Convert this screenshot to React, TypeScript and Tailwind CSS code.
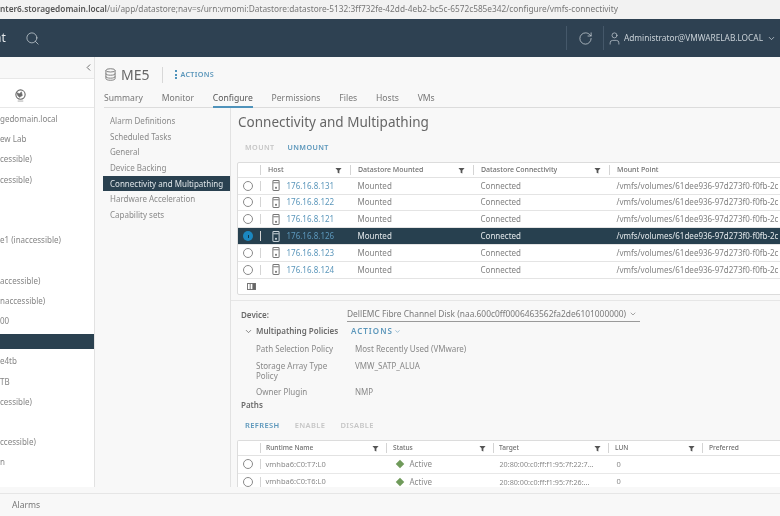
import type { ReactElement } from "react";
import { ChevronDown, ChevronLeft, RotateCw, Search, User } from "lucide-react";

const font = { fontFamily: '"Noto Sans", sans-serif' };

const treeRows = [
  { text: "gedomain.local" },
  { text: "ew Lab" },
  { text: "cessible)" },
  { text: "cessible)" },
  { text: "" },
  { text: "" },
  { text: "e1 (inaccessible)" },
  { text: "" },
  { text: "accessible)" },
  { text: "naccessible)" },
  { text: "00" },
  { text: "", selected: true },
  { text: "e4tb" },
  { text: "TB" },
  { text: "cessible)" },
  { text: "" },
  { text: "ccessible)" },
  { text: "n" },
];

const tabs = ["Summary", "Monitor", "Configure", "Permissions", "Files", "Hosts", "VMs"];

const configItems = [
  "Alarm Definitions",
  "Scheduled Tasks",
  "General",
  "Device Backing",
  "Connectivity and Multipathing",
  "Hardware Acceleration",
  "Capability sets",
];

const hosts = ["176.16.8.131", "176.16.8.122", "176.16.8.121", "176.16.8.126", "176.16.8.123", "176.16.8.124"];

function FilterIcon(): ReactElement {
  return (
    <svg viewBox="0 0 8 8" className="h-[7px] w-[7px] shrink-0 text-[#555]">
      <path d="M0.5 1h7L5 4v3.4L3 6.6V4z" fill="currentColor" />
    </svg>
  );
}

function HostIcon({ light }: { light?: boolean }): ReactElement {
  return (
    <svg viewBox="0 0 8 12" className={`h-[11px] w-[8px] shrink-0 ${light ? "text-[#c8d2d8]" : "text-[#777]"}`}>
      <rect x="0.6" y="0.6" width="6.8" height="10.8" rx="1" fill="none" stroke="currentColor" strokeWidth="1.1" />
      <path d="M1 3h6" stroke="currentColor" strokeWidth="1.1" />
      <rect x="3" y="7.5" width="2" height="2" fill="currentColor" />
    </svg>
  );
}

function Radio({ checked }: { checked?: boolean }): ReactElement {
  return checked ? (
    <span className="flex h-[10px] w-[10px] items-center justify-center rounded-full bg-[#1b87c0]">
      <span className="h-[3px] w-[1px] bg-[#10344a]" />
    </span>
  ) : (
    <span className="h-[10px] w-[10px] rounded-full border border-[#8a8a8a] bg-white" />
  );
}

function HeaderCell({ label, width, filter = true }: { label: string; width: string; filter?: boolean }): ReactElement {
  return (
    <div className={`flex shrink-0 items-center justify-between ${width}`}>
      <span className="truncate">{label}</span>
      {filter && <FilterIcon />}
    </div>
  );
}

function Sep({ wide }: { wide?: boolean }): ReactElement {
  return <span className={`h-[10px] w-px shrink-0 bg-[#d4d4d4] ${wide ? "mx-[7.5px]" : "mx-[5px]"}`} />;
}

function HostTable(): ReactElement {
  return (
    <div className="ml-[6px] mt-[9px] w-[600px] rounded-[2px] border border-[#dcdcdc] bg-white">
      <div className="flex h-[15px] items-center border-b border-[#e2e2e2] pt-[1px] text-[7px] font-medium text-[#6f6f6f]">
        <span className="w-[17px] shrink-0" />
        <span className="ml-[5px] mr-[7px] h-[10px] w-px shrink-0 bg-[#d4d4d4]" />
        <HeaderCell label="Host" width="w-[74px]" />
        <Sep wide />
        <HeaderCell label="Datastore Mounted" width="w-[107px]" />
        <Sep wide />
        <HeaderCell label="Datastore Connectivity" width="w-[120px]" />
        <Sep wide />
        <HeaderCell label="Mount Point" width="w-[160px]" filter={false} />
      </div>
      {hosts.map((ip, i) => {
        const selected = i === 3;
        return (
          <div
            key={ip}
            className={`flex h-[16.8px] items-center border-b border-[#e4e4e4] text-[8px] ${
              selected ? "bg-[#27404f] text-[#e3e8eb]" : "text-[#828282]"
            }`}
          >
            <span className="flex w-[15px] shrink-0 justify-end">
              <Radio checked={selected} />
            </span>
            <span className="ml-[6.5px] h-[10px] w-px shrink-0 bg-[#d4d4d4]" />
            <span className="ml-[11px] flex w-[86px] shrink-0 items-center gap-[7px] text-[#5c97bb]">
              <HostIcon light={selected} />
              {ip}
            </span>
            <span className="w-[123px] shrink-0">Mounted</span>
            <span className="w-[136px] shrink-0">Connected</span>
            <span className="whitespace-nowrap">/vmfs/volumes/61dee936-97d273f0-f0fb-2c</span>
          </div>
        );
      })}
      <div className="flex h-[15px] items-center pl-[9px]">
        <svg viewBox="0 0 10 8" className="h-[7px] w-[9px] text-[#666]">
          <rect x="0.5" y="0.5" width="9" height="7" fill="none" stroke="currentColor" />
          <path d="M3.5 0.5v7" stroke="currentColor" />
          <rect x="6" y="0.5" width="3.5" height="7" fill="currentColor" />
        </svg>
      </div>
    </div>
  );
}

function PathRow({ name, target }: { name: string; target: string }): ReactElement {
  return (
    <div className="flex h-[17.5px] items-center border-b border-[#e8e8e8] text-[7.5px] text-[#8a8a8a]">
      <span className="flex w-[15px] shrink-0 justify-end">
        <Radio />
      </span>
      <span className="ml-[6.5px] h-[10px] w-px shrink-0 bg-[#d4d4d4]" />
      <span className="ml-[5px] w-[131px] shrink-0">{name}</span>
      <span className="flex w-[103px] shrink-0 items-center gap-[7px] text-[8px]">
        <span className="h-[6px] w-[6px] rotate-45 bg-[#6f9a5a]" />
        Active
      </span>
      <span className="w-[117px] shrink-0 whitespace-nowrap text-[7.2px]">{target}</span>
      <span>0</span>
    </div>
  );
}

function PathTable(): ReactElement {
  return (
    <div className="ml-[6px] mt-[10px] w-[600px] rounded-t-[2px] border-x border-t border-[#dcdcdc] bg-white">
      <div className="flex h-[15px] items-center border-b border-[#e2e2e2] text-[6.6px] font-medium text-[#6f6f6f]">
        <span className="w-[17px] shrink-0" />
        <Sep />
        <HeaderCell label="Runtime Name" width="w-[113px]" />
        <span className="ml-[7px] mr-[6px] h-[10px] w-px shrink-0 bg-[#d4d4d4]" />
        <HeaderCell label="Status" width="w-[93px]" />
        <span className="ml-[7px] mr-[5px] h-[10px] w-px shrink-0 bg-[#d4d4d4]" />
        <HeaderCell label="Target" width="w-[102px]" />
        <span className="ml-[7px] mr-[6px] h-[10px] w-px shrink-0 bg-[#d4d4d4]" />
        <HeaderCell label="LUN" width="w-[80px]" />
        <span className="ml-[7px] mr-[6px] h-[10px] w-px shrink-0 bg-[#d4d4d4]" />
        <HeaderCell label="Preferred" width="w-[70px]" filter={false} />
      </div>
      <PathRow name="vmhba6:C0:T7:L0" target="20:80:00:c0:ff:f1:95:7f:22:7..." />
      <PathRow name="vmhba6:C0:T6:L0" target="20:80:00:c0:ff:f1:95:7f:26:..." />
    </div>
  );
}

export default function App(): ReactElement {
  return (
    <div
      style={font}
      className="flex h-[516px] w-[780px] flex-col overflow-hidden bg-[#f8f8f8] text-[#808080] blur-[0.5px]"
    >
      <div className="flex h-[19px] shrink-0 items-center overflow-hidden whitespace-nowrap bg-[#f2f2f2] text-[8.3px] text-[#777]">
        <span className="font-semibold text-[#555]">nter6.storagedomain.local</span>
        <span>/ui/app/datastore;nav=s/urn:vmomi:Datastore:datastore-5132:3ff732fe-42dd-4eb2-bc5c-6572c585e342/configure/vmfs-connectivity</span>
      </div>

      <header className="flex h-[38px] shrink-0 items-center bg-[#2e4152] text-[#c9d1d7]">
        <span className="-ml-[6px] text-[12px] text-[#e5e9ec]">nt</span>
        <Search className="ml-[19px] h-[15px] w-[15px]" strokeWidth={1.2} />
        <div className="ml-auto flex h-full items-center">
          <span className="h-[24px] w-px bg-[#45586a]" />
          <RotateCw className="ml-[11px] h-[15px] w-[15px]" strokeWidth={1.2} />
          <span className="ml-[10px] h-[24px] w-px bg-[#45586a]" />
          <User className="ml-[3px] h-[15px] w-[15px]" strokeWidth={1.1} />
          <span className="ml-[2px] text-[8.3px]">Administrator@VMWARELAB.LOCAL</span>
          <ChevronDown className="ml-[4px] mr-[4px] h-[9px] w-[9px]" />
        </div>
      </header>

      <div className="flex min-h-0 flex-1">
        <aside className="flex w-[95px] shrink-0 flex-col border-r border-[#e2e2e2] bg-white">
          <div className="flex h-[22px] shrink-0 items-center justify-end border-b border-[#e8e8e8] bg-[#f8f8f8]">
            <ChevronLeft className="h-[11px] w-[11px] text-[#666]" />
          </div>
          <div className="flex h-[29px] shrink-0 items-center border-b border-[#e8e8e8] pl-[14px] pt-[4px]">
            <svg viewBox="0 0 14 14" className="h-[13px] w-[13px] text-[#6a6a6a]">
              <circle cx="7" cy="6" r="5" fill="none" stroke="currentColor" strokeWidth="1.2" />
              <path d="M3 4l3 1 2-2 1 4-3 2-2-2zM4 13h6" fill="currentColor" stroke="currentColor" strokeWidth="0.6" />
            </svg>
          </div>
          <div className="flex flex-col whitespace-nowrap pt-[1px] text-[8px] text-[#858585]">
            {treeRows.map((row, i) => (
              <div key={i} className="flex h-[20.2px] items-center">
                {row.selected ? <div className="h-[15px] w-full bg-[#2a4150]" /> : row.text}
              </div>
            ))}
          </div>
        </aside>

        <div className="flex min-w-0 flex-1 flex-col">
          <div className="flex h-[35px] shrink-0 items-center pl-[10px]">
            <svg viewBox="0 0 12 14" className="h-[13px] w-[11px] text-[#777]">
              <ellipse cx="6" cy="2.5" rx="5" ry="1.8" fill="none" stroke="currentColor" />
              <path d="M1 2.5v9c0 1 2 1.8 5 1.8s5-.8 5-1.8v-9M1 6c0 1 2 1.8 5 1.8S11 7 11 6M1 9.2c0 1 2 1.8 5 1.8s5-.8 5-1.8" fill="none" stroke="currentColor" />
            </svg>
            <span className="ml-[5px] text-[14px] text-[#666]">ME5</span>
            <span className="ml-[12px] h-[16px] w-px bg-[#d8d8d8]" />
            <span className="ml-[12px] flex flex-col gap-[1.5px]">
              <span className="h-[2px] w-[2px] bg-[#4f93bb]" />
              <span className="h-[2px] w-[2px] bg-[#4f93bb]" />
              <span className="h-[2px] w-[2px] bg-[#4f93bb]" />
            </span>
            <span className="ml-[4px] text-[7.2px] font-semibold tracking-[0.3px] text-[#5c97bb]">ACTIONS</span>
          </div>

          <nav className="ml-[9px] flex h-[16px] shrink-0 gap-[18.8px] border-b border-[#dcdcdc] text-[8.6px] text-[#777]">
            {tabs.map((tab) => (
              <span key={tab} className={tab === "Configure" ? "h-[16px] border-b-2 border-[#4f93bb] text-[#555]" : ""}>
                {tab}
              </span>
            ))}
          </nav>

          <div className="flex min-h-0 flex-1">
            <div className="w-[136px] shrink-0 border-r border-[#e2e2e2] pl-[8px] pt-[5px] text-[8px] text-[#8a8a8a]">
              {configItems.map((item) => (
                <div
                  key={item}
                  className={`flex h-[15.7px] items-center whitespace-nowrap pl-[7px] ${
                    item.startsWith("Connectivity") ? "bg-[#2a4150] text-[#dfe5e8]" : ""
                  }`}
                >
                  {item}
                </div>
              ))}
            </div>

            <main className="min-w-0 flex-1 overflow-hidden">
              <h1 className="pl-[7px] pt-[4px] text-[13.5px] leading-[20px] text-[#666]">
                Connectivity and Multipathing
              </h1>
              <div className="ml-[14px] mt-[10px] flex gap-[13px] text-[7.2px] font-semibold tracking-[0.4px]">
                <span className="text-[#c6c6c6]">MOUNT</span>
                <span className="text-[#5c97bb]">UNMOUNT</span>
              </div>
              <HostTable />
              <div className="mt-[5px] h-px bg-[#e6e6e6]" />

              <div className="ml-[10px] mt-[7px] flex items-center text-[8px]">
                <span className="w-[106px] font-semibold text-[#6a6a6a]">Device:</span>
                <span className="flex w-[293px] items-center justify-between whitespace-nowrap border-b border-[#9a9a9a] pb-[1px] text-[8.4px] text-[#7a7a7a]">
                  DellEMC Fibre Channel Disk (naa.600c0ff0006463562fa2de6101000000)
                  <ChevronDown className="mr-[3px] h-[8px] w-[8px]" />
                </span>
              </div>
              <div className="ml-[13px] mt-[2px] flex h-[14px] items-center text-[8px]">
                <ChevronDown className="h-[9px] w-[9px] text-[#666]" />
                <span className="ml-[3px] w-[95px] font-semibold text-[#6a6a6a]">Multipathing Policies</span>
                <span className="flex items-center gap-[1px] text-[8px] font-semibold tracking-[1px] text-[#5c97bb]">
                  ACTIONS
                  <ChevronDown className="h-[7px] w-[7px]" />
                </span>
              </div>
              <div className="ml-[25px] mt-[2px] grid grid-cols-[99px_1fr] text-[8px] leading-[9.5px] text-[#888]">
                <span className="flex h-[17px] items-center">Path Selection Policy</span>
                <span className="flex h-[17px] items-center">Most Recently Used (VMware)</span>
                <span className="h-[26px] pt-[4px]">
                  Storage Array Type
                  <br />
                  Policy
                </span>
                <span className="pt-[4px]">VMW_SATP_ALUA</span>
                <span className="flex h-[17px] items-center">Owner Plugin</span>
                <span className="flex h-[17px] items-center">NMP</span>
              </div>
              <div className="ml-[10px] text-[8px] font-semibold leading-[10px] text-[#6a6a6a]">Paths</div>
              <div className="ml-[14px] mt-[10px] flex gap-[15px] text-[7.5px] font-semibold tracking-[0.4px] leading-[10px]">
                <span className="text-[#5c97bb]">REFRESH</span>
                <span className="text-[#c6c6c6]">ENABLE</span>
                <span className="text-[#c6c6c6]">DISABLE</span>
              </div>
              <PathTable />
            </main>
          </div>
        </div>
      </div>

      <footer className="mt-[6px] flex h-[23px] shrink-0 items-center border-t border-[#e6e6e6] pl-[12px] text-[8.6px] text-[#777]">
        Alarms
      </footer>
    </div>
  );
}
